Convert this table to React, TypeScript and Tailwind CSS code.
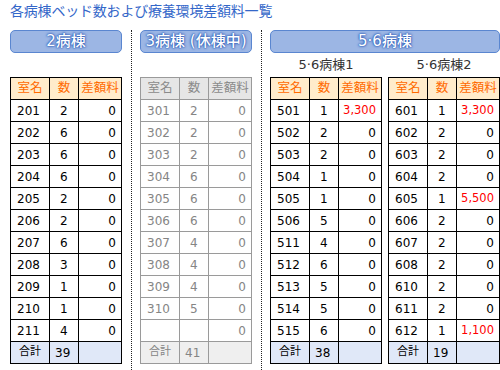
import React from "react";

type Row = { room: string; n: string; fee: string; red?: boolean };

const t1: Row[] = [
  { room: "201", n: "2", fee: "0" },
  { room: "202", n: "6", fee: "0" },
  { room: "203", n: "6", fee: "0" },
  { room: "204", n: "6", fee: "0" },
  { room: "205", n: "2", fee: "0" },
  { room: "206", n: "2", fee: "0" },
  { room: "207", n: "6", fee: "0" },
  { room: "208", n: "3", fee: "0" },
  { room: "209", n: "1", fee: "0" },
  { room: "210", n: "1", fee: "0" },
  { room: "211", n: "4", fee: "0" },
];
const t2: Row[] = [
  { room: "301", n: "2", fee: "0" },
  { room: "302", n: "2", fee: "0" },
  { room: "303", n: "2", fee: "0" },
  { room: "304", n: "6", fee: "0" },
  { room: "305", n: "6", fee: "0" },
  { room: "306", n: "6", fee: "0" },
  { room: "307", n: "4", fee: "0" },
  { room: "308", n: "4", fee: "0" },
  { room: "309", n: "4", fee: "0" },
  { room: "310", n: "5", fee: "0" },
  { room: "", n: "", fee: "0" },
];
const t3: Row[] = [
  { room: "501", n: "1", fee: "3,300", red: true },
  { room: "502", n: "2", fee: "0" },
  { room: "503", n: "2", fee: "0" },
  { room: "504", n: "1", fee: "0" },
  { room: "505", n: "1", fee: "0" },
  { room: "506", n: "5", fee: "0" },
  { room: "511", n: "4", fee: "0" },
  { room: "512", n: "6", fee: "0" },
  { room: "513", n: "5", fee: "0" },
  { room: "514", n: "5", fee: "0" },
  { room: "515", n: "6", fee: "0" },
];
const t4: Row[] = [
  { room: "601", n: "1", fee: "3,300", red: true },
  { room: "602", n: "2", fee: "0" },
  { room: "603", n: "2", fee: "0" },
  { room: "604", n: "2", fee: "0" },
  { room: "605", n: "1", fee: "5,500", red: true },
  { room: "606", n: "2", fee: "0" },
  { room: "607", n: "2", fee: "0" },
  { room: "608", n: "2", fee: "0" },
  { room: "610", n: "2", fee: "0" },
  { room: "611", n: "2", fee: "0" },
  { room: "612", n: "1", fee: "1,100", red: true },
];

function Table({ rows, total, grey }: { rows: Row[]; total: string; grey?: boolean }) {
  const bc = grey ? "border-[#9a9a9a]" : "border-black";
  const txt = grey ? "text-[#858585]" : "text-black";
  const head = grey ? "bg-[#e6e6e6] text-[#8a8a8a]" : "bg-[#ffeccb] text-[#ff6a00]";
  const foot = grey ? "bg-[#efefef]" : "bg-[#e0e8f8]";
  const c1 = `w-[39px] h-[22px] border-r border-b ${bc} flex items-center`;
  const c2 = `w-[29px] h-[22px] border-r border-b ${bc} flex items-center`;
  const c3 = `w-[43px] h-[22px] border-r border-b ${bc} flex items-center justify-end pr-[5px]`;
  return (
    <div className={`w-[112px] border-l border-t ${bc} ${txt}`}>
      <div className={`flex ${head} text-[12.5px]`}>
        <div className={`${c1} justify-center`}>室名</div>
        <div className={`${c2} justify-center`}>数</div>
        <div className={`w-[43px] h-[22px] border-r border-b ${bc} flex items-center justify-center`}>差額料</div>
      </div>
      {rows.map((r, i) => (
        <div key={i} className="flex text-[12px]">
          <div className={`${c1} pl-[6px]`}>{r.room}</div>
          <div className={`${c2} pl-[10px]`}>{r.n}</div>
          <div className={`${c3} ${r.red ? "text-[#ff0000] text-[11.5px]" : ""}`}>{r.fee}</div>
        </div>
      ))}
      <div className={`flex ${foot}`}>
        <div className={`${c1} justify-center text-[11px]`}>合計</div>
        <div className={`${c2} pl-[5px] text-[12px]`}>{total}</div>
        <div className={`w-[43px] h-[22px] border-r border-b ${bc}`}></div>
      </div>
    </div>
  );
}

function Banner({ label, w }: { label: string; w: string }) {
  return (
    <div
      className={`${w} h-[23px] rounded-[5px] border border-[#5a86d0] bg-[#9cb6e4] flex items-center justify-center text-white text-[15px] font-medium [text-shadow:0_0_2px_#2a5ab8,0_0_3px_#2a5ab8,0_0_1px_#2a5ab8]`}
    >
      {label}
    </div>
  );
}

function Dotted() {
  return (
    <div className="ml-[9px] mr-[8px] self-stretch border-l border-dotted border-[#222]"></div>
  );
}

export default function App() {
  return (
    <div
      className="w-[500px] h-[370px] bg-white overflow-hidden pl-[10px]"
      style={{ fontFamily: '"DejaVu Sans", "Noto Sans CJK JP", sans-serif' }}
    >
      <div className="h-[30px] pt-[1px] text-[14px] text-[#3467c9] leading-[20px] tracking-[-0.2px]">
        各病棟ベッド数および療養環境差額料一覧
      </div>
      <div className="flex h-[340px]">
        <div className="w-[112px] flex flex-col">
          <Banner label="2病棟" w="w-[112px]" />
          <div className="h-[24px]"></div>
          <Table rows={t1} total="39" />
        </div>
        <Dotted />
        <div className="w-[112px] flex flex-col">
          <Banner label="3病棟 (休棟中)" w="w-[112px]" />
          <div className="h-[24px]"></div>
          <Table rows={t2} total="41" grey />
        </div>
        <Dotted />
        <div className="w-[230px] flex flex-col">
          <Banner label="5·6病棟" w="w-[230px]" />
          <div className="flex gap-[6px]">
            <div className="flex flex-col">
              <div className="h-[24px] flex items-center justify-center text-[13px] text-[#333]">5·6病棟1</div>
              <Table rows={t3} total="38" />
            </div>
            <div className="flex flex-col">
              <div className="h-[24px] flex items-center justify-center text-[13px] text-[#333]">5·6病棟2</div>
              <Table rows={t4} total="19" />
            </div>
          </div>
        </div>
      </div>
    </div>
  );
}
